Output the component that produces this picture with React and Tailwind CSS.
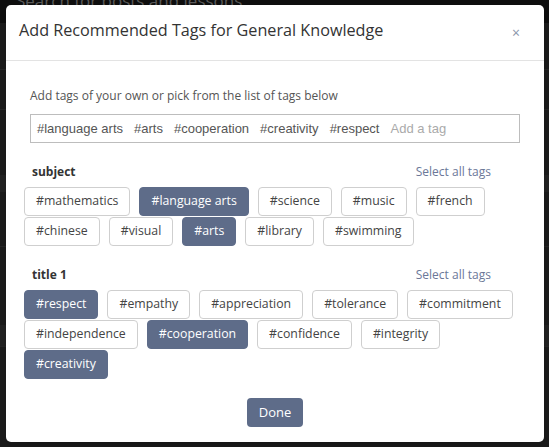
import React from "react";

const subjectTags = [
    { name: "#mathematics", on: false },
    { name: "#language arts", on: true },
    { name: "#science", on: false },
    { name: "#music", on: false },
    { name: "#french", on: false },
    { name: "#chinese", on: false },
    { name: "#visual", on: false },
    { name: "#arts", on: true },
    { name: "#library", on: false },
    { name: "#swimming", on: false },
];

const titleTags = [
    { name: "#respect", on: true },
    { name: "#empathy", on: false },
    { name: "#appreciation", on: false },
    { name: "#tolerance", on: false },
    { name: "#commitment", on: false },
    { name: "#independence", on: false },
    { name: "#cooperation", on: true },
    { name: "#confidence", on: false },
    { name: "#integrity", on: false },
    { name: "#creativity", on: true },
];

const picked = ["#language arts", "#arts", "#cooperation", "#creativity", "#respect"];

function Chip({ tag }) {
    return (
        <button
            className={
                tag.on
                    ? "h-[29px] px-[11px] rounded-[4px] border border-[#5e6c89] bg-[#5e6c89] text-white text-[12.3px] leading-none"
                    : "h-[29px] px-[11px] rounded-[4px] border border-[#cfcfcf] bg-white text-[#444] text-[12.3px] leading-none"
            }
        >
            {tag.name}
        </button>
    );
}

function Section({ label, tags }) {
    return (
        <div>
            <div className="flex items-center justify-between h-[20px] pl-[26px] pr-[53px]">
                <span className="text-[12px] font-bold text-[#333]">{label}</span>
                <span className="text-[12px] text-[#6b7898]">Select all tags</span>
            </div>
            <div className="flex flex-wrap gap-x-[9px] gap-y-px pl-[18px] pr-[22px] mt-[5px]">
                {tags.map((t) => (
                    <Chip key={t.name} tag={t} />
                ))}
            </div>
        </div>
    );
}

export default function App() {
    return (
        <div className="relative w-[549px] h-[447px] overflow-hidden bg-[#1b1b1b]" style={{ fontFamily: '"Open Sans", sans-serif' }}>
            {/* page behind the overlay */}
            <div className="h-[23px] bg-[#0e0e0e] px-[16px] overflow-hidden">
                <div className="-mt-[12px] text-[17px] text-[#5a5a5a]">Search for posts and lessons</div>
            </div>
            <div className="h-[47px] border-b border-[#262626]"></div>
            <div className="h-[40px] border-b border-[#262626]"></div>
            <div className="h-[65px]"></div>
            <div className="h-[17px] bg-[#222]"></div>
            <div className="h-[55px] border-b border-[#262626]"></div>
            <div className="h-[78px]"></div>
            <div className="h-[22px] bg-[#222] border-b border-[#262626]"></div>

            {/* modal */}
            <div className="absolute left-[6px] top-[5px] w-[538px] h-[437px] bg-white rounded-[5px] shadow-lg flex flex-col">
                <div className="h-[56px] flex items-center justify-between pl-[13px] pr-[24px] border-b border-[#e3e3e3]">
                    <h2 className="text-[16.2px] text-[#333] -mt-[5px]">Add Recommended Tags for General Knowledge</h2>
                    <span className="text-[14px] text-[#8a94aa] leading-none">×</span>
                </div>

                <div className="px-[24px] pt-[26px]">
                    <p className="text-[12px] text-[#555] leading-[17px]">Add tags of your own or pick from the list of tags below</p>
                    <div
                        className="mt-[10px] h-[29px] border border-[#bdbdbd] flex items-center gap-[11px] pl-[6px] text-[13px] text-[#555]"
                        style={{ fontFamily: '"Liberation Sans", Arial, sans-serif' }}
                    >
                        {picked.map((p) => (
                            <span key={p}>{p}</span>
                        ))}
                        <span className="text-[#aaa]">Add a tag</span>
                    </div>
                </div>

                <div className="mt-[19px]">
                    <Section label="subject" tags={subjectTags} />
                </div>
                <div className="mt-[19px]">
                    <Section label="title 1" tags={titleTags} />
                </div>

                <div className="flex justify-center mt-[19px]">
                    <button className="h-[29px] w-[56px] rounded-[4px] bg-[#5e6c89] text-white text-[13px]">Done</button>
                </div>
            </div>
        </div>
    );
}
